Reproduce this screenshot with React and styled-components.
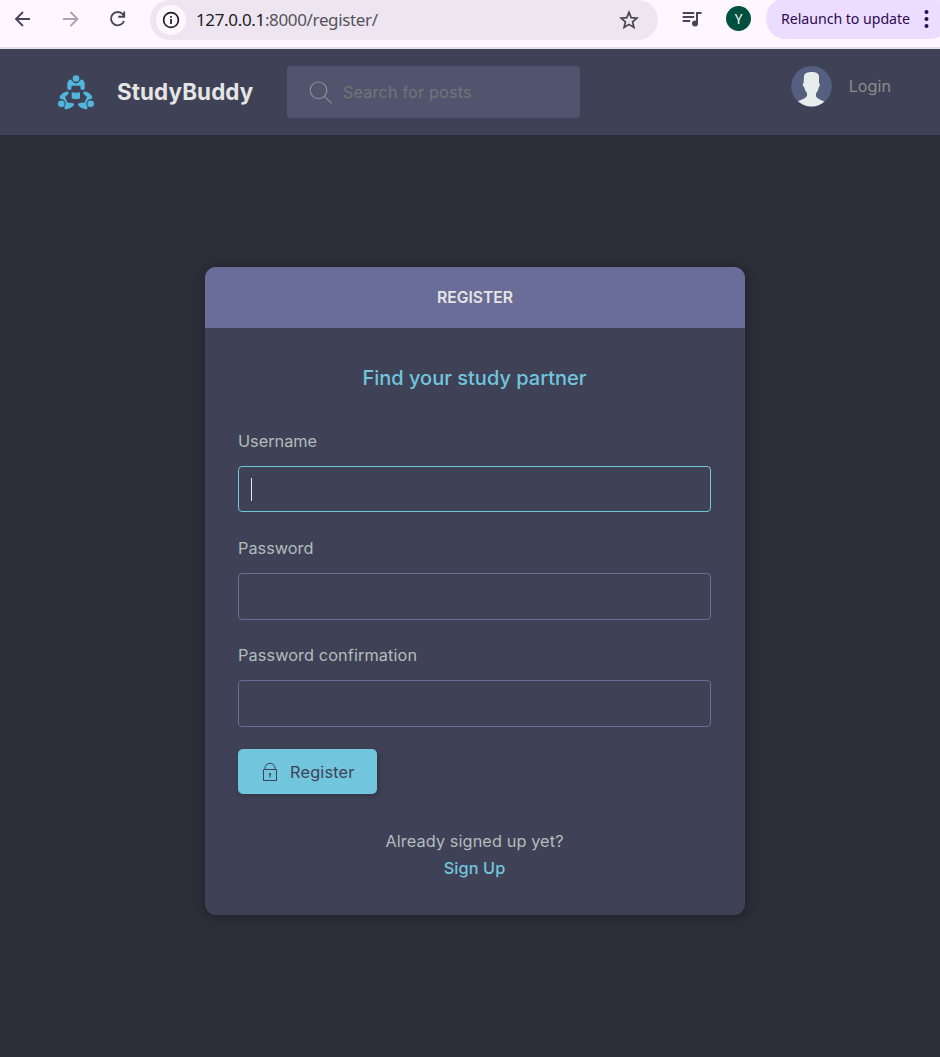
import React from "react";
import styled, { createGlobalStyle } from "styled-components";

const Global = createGlobalStyle`
  * { box-sizing: border-box; }
  body { margin: 0; background: #2d2d39; font-family: Inter, "Liberation Sans", sans-serif; }
`;
const Page = styled.div`
  width: 940px;
  height: 1057px;
  overflow: hidden;
  background: #2d2d39;
`;
const Line = styled.span`
  display: inline-block;
  white-space: nowrap;
  font-size: ${(p) => p.$size || 16.3}px;
  font-weight: ${(p) => p.$weight || 400};
  letter-spacing: ${(p) => p.$track || 0}px;
  color: ${(p) => p.$color || "#b2bdbd"};
`;

const Toolbar = styled.div`
  height: 49px;
  background: #fef7ff;
  border-bottom: 2px solid #e6dfe9;
  display: flex;
  align-items: flex-start;
  overflow: hidden;
`;
const NavIcons = styled.div`
  display: flex;
  width: 150px;
  height: 37px;
  align-items: center;
  padding-left: 11px;
  gap: 23.5px;
  flex: none;
  svg { flex: none; }
`;
const AddressBar = styled.div`
  width: 508px;
  height: 40px;
  flex: none;
  background: #ede6f0;
  border-radius: 20px;
  display: flex;
  align-items: center;
  padding: 0 19px 1px 6px;
`;
const InfoBadge = styled.div`
  width: 30px;
  height: 30px;
  border-radius: 50%;
  background: #fef7ff;
  display: grid;
  place-items: center;
  margin-right: 10px;
`;
const Url = styled.span`
  flex: 1;
  font-family: "Noto Sans", "Open Sans", sans-serif;
  font-size: 17px;
  letter-spacing: -0.35px;
  color: #56525b;
  b { font-weight: 400; color: #1d1b20; }
`;
const ToolbarRight = styled.div`
  display: flex;
  align-items: center;
  height: 37px;
  padding-left: 22px;
  flex: none;
`;
const Profile = styled.div`
  width: 25px;
  height: 25px;
  margin: 0 15px 0 22px;
  border-radius: 50%;
  background: #00503f;
  color: #fff;
  display: grid;
  place-items: center;
  font: 13.5px "Noto Sans", sans-serif;
`;
const Relaunch = styled.div`
  width: 184px;
  height: 41px;
  border-radius: 20px;
  background: #ecdcfd;
  color: #2c0b52;
  display: flex;
  align-items: center;
  padding-left: 15px;
  font: 14.2px "Noto Sans", sans-serif;
  span { width: 138px; white-space: nowrap; letter-spacing: -0.05px; }
`;

const Header = styled.header`
  height: 86px;
  background: #3f4156;
  display: flex;
  align-items: flex-start;
  padding: 17px 49px 0 58px;
`;
const Brand = styled.div`
  width: 229px;
  height: 52px;
  display: flex;
  align-items: center;
  gap: 23px;
  > span { padding-bottom: 2px; }
`;
const Search = styled.div`
  width: 293px;
  height: 52px;
  border-radius: 4px;
  background: #51546e;
  display: flex;
  align-items: center;
  padding-left: 22px;
  gap: 11px;
`;
const Account = styled.div`
  margin-left: auto;
  height: 40px;
  display: flex;
  align-items: center;
  gap: 17px;
`;

const Main = styled.main`
  padding-top: 132px;
  display: flex;
  justify-content: center;
  padding-left: 10px;
`;
const Card = styled.section`
  width: 540px;
  height: 647.5px;
  background: #3f4156;
  border-radius: 11px;
  overflow: hidden;
  box-shadow: 1px 1px 7px 2px rgba(0, 0, 0, 0.2);
`;
const CardHeader = styled.div`
  height: 61px;
  background: #696d97;
  display: grid;
  place-items: center;
`;
const CardBody = styled.div`
  padding: 35px 34px 0 33px;
  display: flex;
  flex-direction: column;
`;
const Title = styled.h3`
  margin: 0 0 37px;
  height: 30px;
  line-height: 30px;
  text-align: center;
  font-size: 0;
`;
const Field = styled.label`
  display: block;
  height: 107px;
  line-height: 23px;
`;
const Input = styled.div`
  height: ${(p) => (p.$focus ? 46 : 47)}px;
  margin-top: 13px;
  border: 1px solid ${(p) => (p.$focus ? "#71c6dd" : "#696d97")};
  border-radius: 4px;
  display: flex;
  align-items: center;
  padding-left: 12px;
`;
const Caret = styled.span`
  width: 1px;
  height: 23px;
  background: #e5e5e5;
`;
const Button = styled.button`
  width: 139px;
  height: 45px;
  margin: -2px 0 34px;
  padding: 0 0 0 24px;
  border: 0;
  border-radius: 5px;
  background: #71c6dd;
  box-shadow: 2px 2px 5px 1px rgba(0, 0, 0, 0.16);
  display: flex;
  align-items: center;
  gap: 12px;
  font-family: inherit;
`;
const Footer = styled.div`
  display: flex;
  flex-direction: column;
  align-items: center;
  line-height: 27px;
`;

const Logo = () => (
  <svg width="36" height="35" viewBox="0 0 108 104" fill="#51b6dc">
    <circle cx="54" cy="10" r="10" />
    <path d="M37 13c5 0 8 11 14 11h6c6 0 9-11 14-11 6 0 9 8 9 16v12c-2 4-8 4-12 1l-1-10H41l-1 10c-4 3-10 3-12-1V29c0-8 3-16 9-16z" />
    <path d="M41 51l13 2 12-2v19l-12 2-13-2z" />
    <g id="side">
      <circle cx="10" cy="86" r="10" />
      <path d="M5 67c1-9 14-18 24-18 4 1 4 7 0 10l-8 6 7 16c5 3 17 1 20 5 2 7-13 16-25 16-6-1-3-8 0-14 1-8-3-14-10-16-5 0-8-2-8-5z" />
    </g>
    <use href="#side" transform="translate(108 0) scale(-1 1)" />
  </svg>
);
const Avatar = () => (
  <svg width="41" height="41" viewBox="0 0 123 123">
    <clipPath id="disc"><circle cx="61.5" cy="61" r="60.5" /></clipPath>
    <circle cx="61.5" cy="61" r="61" fill="#556080" />
    <path clipPath="url(#disc)" fill="#e7eced" d="M39 31c0-9 11-13 23-13s22 4 22 13v19c4 4 3 12-1 14-1 8-4 14-8 18v9c4 9 15 10 27 18L86 123H34L20 106c12-6 24-8 28-17v-8c-4-4-7-10-8-17-5-3-6-11-2-14z" />
  </svg>
);

export default function App() {
  return (
    <Page>
      <Global />
      <Toolbar>
        <NavIcons>
          <svg width="24" height="24" viewBox="0 0 24 24" fill="none" stroke="#4a4458" strokeWidth="1.9"><path d="M19 12H5M12 5l-7 7 7 7" /></svg>
          <svg width="24" height="24" viewBox="0 0 24 24" fill="none" stroke="#aaa4ad" strokeWidth="1.9"><path d="M4 12h14M11.500 5l7 7-7 7" /></svg>
          <svg width="24" height="24" viewBox="0 0 24 24" fill="none" stroke="#4a4458" strokeWidth="1.9"><path d="M18 14a6.700 6.700 0 1 1-1-6.500l1 1.300M18.200 4.500v5.300h-6" /></svg>
        </NavIcons>
        <AddressBar>
          <InfoBadge>
            <svg width="18" height="18" viewBox="0 0 18 18" fill="none" stroke="#1d1b20" strokeWidth="1.7"><circle cx="9" cy="9" r="7.400" /><path d="M9 8v5M9 5v1.700" /></svg>
          </InfoBadge>
          <Url><b>127.0.0.1</b>:8000/register/</Url>
          <svg width="20" height="20" viewBox="0 0 20 20" fill="none" stroke="#49454e" strokeWidth="1.700"><path d="M10 2.300l2.200 5.300 5.700.5-4.300 3.700 1.300 5.600-4.900-3-4.900 3 1.300-5.600L2.100 8.100l5.700-.5z" /></svg>
        </AddressBar>
        <ToolbarRight>
          <svg width="24" height="24" viewBox="0 0 24 24" fill="none" stroke="#4a4458" strokeWidth="2"><path d="M2.700 6h11.500M2.700 10h11.500M2.700 14h7.500M17 17V6h4.500" /><circle cx="15" cy="16.500" r="3" fill="#4a4458" stroke="none" /></svg>
          <Profile>Y</Profile>
          <Relaunch>
            <span>Relaunch to update</span>
            <svg width="16" height="20" viewBox="0 0 16 20" fill="#2c0b52"><circle cx="7.500" cy="3" r="2" /><circle cx="7.500" cy="10" r="2" /><circle cx="7.500" cy="17" r="2" /></svg>
          </Relaunch>
        </ToolbarRight>
      </Toolbar>
      <Header>
        <Brand>
          <Logo />
          <Line $size={22.4} $weight={700} $track={0.1} $color="#e5e5e5">StudyBuddy</Line>
        </Brand>
        <Search>
          <svg width="23" height="23" viewBox="0 0 23 23" fill="none" stroke="#8b8d91" strokeWidth="1.2"><circle cx="9.500" cy="9.300" r="8.300" /><path d="M15.500 15.300l7 7" /></svg>
          <Line $track={0.12} $color="#747575">Search for posts</Line>
        </Search>
        <Account>
          <Avatar />
          <Line $size={16.2} $color="#8b8b8b">Login</Line>
        </Account>
      </Header>
      <Main>
        <Card>
          <CardHeader><Line $size={15.7} $weight={600} $color="#e5e5e5">REGISTER</Line></CardHeader>
          <CardBody>
            <Title><Line $size={20} $weight={500} $color="#71c6dd">Find your study partner</Line></Title>
            <Field><Line>Username</Line><Input $focus><Caret /></Input></Field>
            <Field><Line>Password</Line><Input /></Field>
            <Field><Line $track={0.1}>Password confirmation</Line><Input /></Field>
            <Button>
              <svg width="16" height="20" viewBox="0 0 16 20" fill="none" stroke="#3f4156" strokeWidth="1"><path d="M1.500 7.500h13v11h-13zM3 7.500V6.300a5 5 0 0 1 10 0v1.200" /><circle cx="8" cy="12" r=".8" /><path d="M8 12v3.500" /></svg>
              <Line $track={0.2} $color="#3f4156">Register</Line>
            </Button>
            <Footer>
              <Line $track={0.1}>Already signed up yet?</Line>
              <Line $weight={500} $track={0.1} $color="#71c6dd">Sign Up</Line>
            </Footer>
          </CardBody>
        </Card>
      </Main>
    </Page>
  );
}
